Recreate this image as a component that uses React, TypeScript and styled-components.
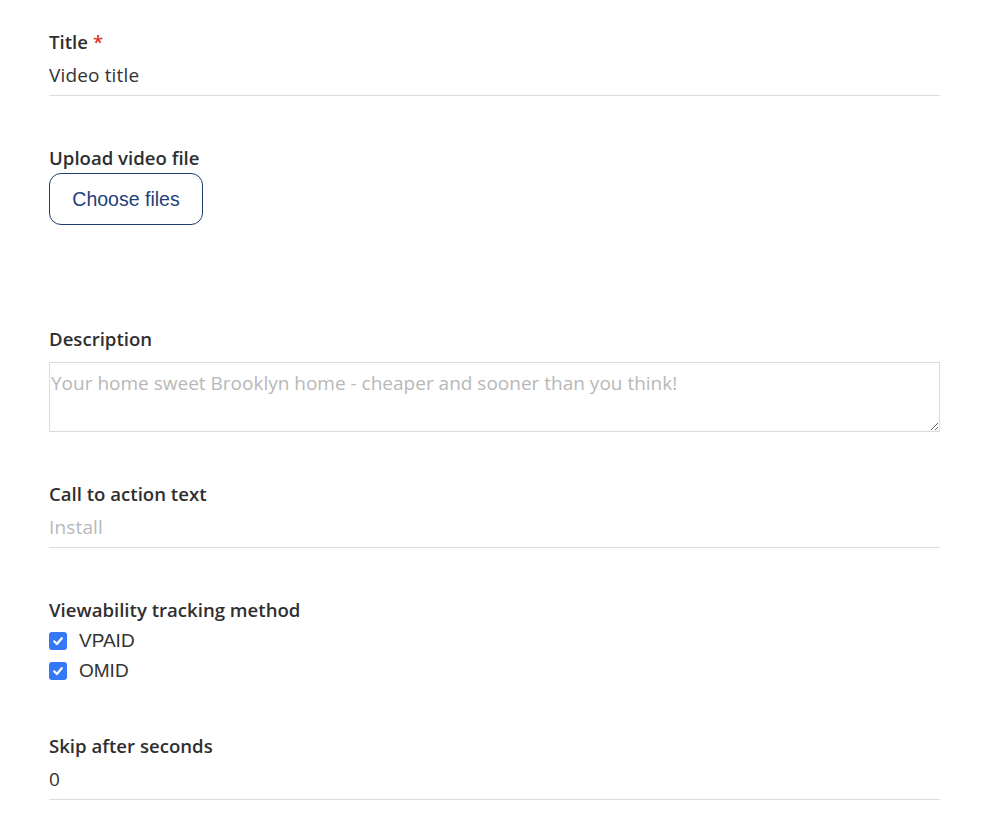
import React from "react";
import styled, { createGlobalStyle } from "styled-components";

const Global = createGlobalStyle`
  html, body { margin: 0; padding: 0; background: #ffffff; }
  body { font-family: "Open Sans", Lato, Arial, sans-serif; color: #333333; }
  * { box-sizing: border-box; }
`;

const Form = styled.form`
  display: flex;
  flex-direction: column;
  gap: 50px;
  width: 891px;
  margin-left: 49px;
  padding-top: 30px;
`;

const Field = styled.div<{ $extra?: number; $pull?: number }>`
  display: flex;
  flex-direction: column;
  padding-bottom: ${(p) => p.$extra ?? 0}px;
  margin-bottom: ${(p) => -(p.$pull ?? 0)}px;
`;

const Label = styled.label`
  font-size: 18.6px;
  line-height: 24px;
  font-weight: 600;
  color: #2f2f2f;
`;

const Required = styled.span`
  color: #e0321e;
  margin-left: 5px;
`;

const LineInput = styled.input`
  border: none;
  border-bottom: 1px solid #dcdcdc;
  padding: 9px 0 8px;
  font-family: inherit;
  font-size: 19px;
  line-height: 24px;
  letter-spacing: 0.15px;
  color: #333333;
  outline: none;
  background: transparent;
  &::placeholder { color: #b8b8b8; }
`;

const FileButton = styled.button`
  margin-top: 3px;
  width: 154px;
  height: 52px;
  border: 1px solid #1f3c6e;
  border-radius: 12px;
  background: #ffffff;
  color: #1e3f7b;
  font-family: "Liberation Sans", Arial, sans-serif;
  font-size: 19.5px;
`;

const TextArea = styled.textarea`
  margin-top: 11px;
  height: 70px;
  border: 1px solid #dcdcdc;
  padding: 8px 1px;
  font-family: inherit;
  font-size: 19px;
  line-height: 24px;
  color: #333333;
  resize: vertical;
  outline: none;
  &::placeholder { color: #b8b8b8; }
`;

const Options = styled.div`
  margin-top: 4px;
  display: flex;
  flex-direction: column;
`;

const Option = styled.label`
  display: flex;
  align-items: center;
  gap: 12px;
  height: 30px;
  font-family: "Liberation Sans", Arial, sans-serif;
  font-size: 19px;
  color: #333333;
`;

const Box = styled.span`
  width: 18px;
  height: 18px;
  border-radius: 3px;
  background: #3478f6;
  display: flex;
  align-items: center;
  justify-content: center;
`;

const Check = ({ label }: { label: string }) => (
  <Option>
    <Box>
      <svg width="12" height="12" viewBox="0 0 12 12">
        <path d="M2.2 6.3 L4.9 9 L9.8 3.2" fill="none" stroke="#fff" strokeWidth="2.2" strokeLinecap="round" strokeLinejoin="round" />
      </svg>
    </Box>
    {label}
  </Option>
);

export default function App() {
  return (
    <>
      <Global />
      <Form onSubmit={(e) => e.preventDefault()}>
        <Field>
          <Label>
            Title<Required>*</Required>
          </Label>
          <LineInput defaultValue="Video title" />
        </Field>
        <Field $extra={52}>
          <Label>Upload video file</Label>
          <div>
            <FileButton type="button">Choose files</FileButton>
          </div>
        </Field>
        <Field>
          <Label>Description</Label>
          <TextArea placeholder="Your home sweet Brooklyn home - cheaper and sooner than you think!" />
        </Field>
        <Field>
          <Label>Call to action text</Label>
          <LineInput placeholder="Install" />
        </Field>
        <Field $pull={2}>
          <Label>Viewability tracking method</Label>
          <Options>
            <Check label="VPAID" />
            <Check label="OMID" />
          </Options>
        </Field>
        <Field>
          <Label>Skip after seconds</Label>
          <LineInput defaultValue="0" />
        </Field>
      </Form>
    </>
  );
}
